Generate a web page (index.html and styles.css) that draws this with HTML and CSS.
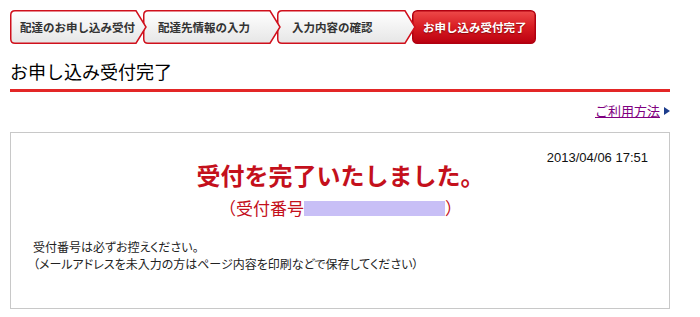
FILE: index.html
```html
<!DOCTYPE html>
<html lang="ja">
<head>
<meta charset="utf-8">
<title>お申し込み受付完了</title>
<link rel="stylesheet" href="styles.css">
</head>
<body>
<div class="page">
  <ol class="steps">
    <li class="step s1">
      <svg class="step-bg" width="137" height="34" viewBox="0 0 137 34"><defs><linearGradient id="g1" x1="0" y1="0" x2="0" y2="1"><stop offset="0" stop-color="#ffffff"/><stop offset="1" stop-color="#e6e6e6"/></linearGradient></defs><path d="M5,0.75 H126 L136,17 L126,33.25 H5 Q0.75,33.25 0.75,29 V5 Q0.75,0.75 5,0.75 Z" fill="url(#g1)" stroke="#d0101c" stroke-width="1.5"/></svg>
      <span class="step-label">配達のお申し込み受付</span>
    </li>
    <li class="step s2">
      <svg class="step-bg" width="138" height="34" viewBox="0 0 138 34"><path d="M5,0.75 H127 L137,17 L127,33.25 H5 Q0.75,33.25 0.75,29 V5 Q0.75,0.75 5,0.75 Z" fill="url(#g1)" stroke="#d0101c" stroke-width="1.5"/></svg>
      <span class="step-label">配達先情報の入力</span>
    </li>
    <li class="step s3">
      <svg class="step-bg" width="139" height="34" viewBox="0 0 139 34"><path d="M5,0.75 H128 L138,17 L128,33.25 H5 Q0.75,33.25 0.75,29 V5 Q0.75,0.75 5,0.75 Z" fill="url(#g1)" stroke="#d0101c" stroke-width="1.5"/></svg>
      <span class="step-label">入力内容の確認</span>
    </li>
    <li class="step s4 current">
      <svg class="step-bg" width="124" height="34" viewBox="0 0 124 34"><defs><linearGradient id="g4" x1="0" y1="0" x2="0" y2="1"><stop offset="0" stop-color="#ee4a4a"/><stop offset="0.5" stop-color="#d81c22"/><stop offset="1" stop-color="#bb0010"/></linearGradient></defs><rect x="0.75" y="0.75" width="122.5" height="32.5" rx="4.5" fill="url(#g4)" stroke="#b00010" stroke-width="1.5"/></svg>
      <span class="step-label">お申し込み受付完了</span>
    </li>
  </ol>

  <h1 class="title">お申し込み受付完了</h1>

  <div class="help">
    <a class="help-link" href="#">ご利用方法</a>
    <svg class="help-arrow" width="6" height="8" viewBox="0 0 6 8"><path d="M0,0 L6,4 L0,8 Z" fill="#1c3c8c"/></svg>
  </div>

  <section class="result">
    <div class="result-head">
      <p class="date">2013/04/06 17:51</p>
      <h2 class="headline">受付を完了いたしました。</h2>
    </div>
    <p class="number">（受付番号<span class="number-mask"></span>）</p>
    <p class="note">受付番号は必ずお控えください。<br>（メールアドレスを未入力の方はページ内容を印刷などで保存してください）</p>
  </section>
</div>
</body>
</html>
```

FILE: styles.css
```css
html, body {
  margin: 0;
  padding: 0;
  background: #ffffff;
}

body {
  font-family: "Noto Sans CJK JP", "Noto Sans", sans-serif;
  color: #222222;
}

.page {
  width: 660px;
  padding: 10px 0 0 10px;
}

.steps {
  list-style: none;
  margin: 0;
  padding: 0;
  display: flex;
  height: 34px;
}

.step {
  position: relative;
  height: 34px;
  display: flex;
  align-items: center;
  flex: none;
}

.step + .step {
  margin-left: -4px;
}

.s1 { width: 137px; z-index: 4; padding-left: 10px; }
.s2 { width: 138px; z-index: 3; padding-left: 15px; }
.s3 { width: 139px; z-index: 2; padding-left: 15px; }
.s4 { width: 124px; z-index: 1; padding-left: 11px; }

.step {
  box-sizing: border-box;
}

.step-bg {
  position: absolute;
  left: 0;
  top: 0;
  display: block;
}

.step-label {
  position: relative;
  font-size: 11.5px;
  font-weight: bold;
  color: #333333;
  line-height: 14px;
  white-space: nowrap;
}

.current .step-label {
  color: #ffffff;
  text-shadow: 0 1px 1px rgba(90, 0, 0, 0.6);
}

.title {
  margin: 16px 0 0 0;
  font-size: 18px;
  font-weight: normal;
  line-height: 22px;
  color: #000000;
  padding-bottom: 7px;
  border-bottom: 3px solid #e32626;
}

.help {
  margin-top: 11px;
  display: flex;
  justify-content: flex-end;
  align-items: center;
  gap: 4px;
  height: 16px;
}

.help-link {
  font-size: 13px;
  line-height: 16px;
  color: #800080;
  text-decoration: underline;
}

.help-arrow {
  display: block;
}

.result {
  margin-top: 13px;
  box-sizing: border-box;
  height: 177px;
  border: 1px solid #c8c8c8;
  padding: 0 21px 0 22px;
}

.result-head {
  display: grid;
  grid-template-columns: 1fr;
}

.date {
  grid-area: 1 / 1;
  justify-self: end;
  margin: 17px 0 0 0;
  font-family: "Liberation Sans", Arial, sans-serif;
  font-size: 13px;
  line-height: 16px;
  color: #111111;
}

.headline {
  grid-area: 1 / 1;
  justify-self: center;
  margin: 28px 0 0 0;
  font-size: 24px;
  line-height: 28px;
  font-weight: bold;
  color: #c4101c;
}

.number {
  margin: 8px 0 0 0;
  text-align: center;
  font-size: 17px;
  line-height: 22px;
  color: #c4101c;
}

.number-mask {
  display: inline-block;
  width: 141px;
  height: 15px;
  background: #c8bff6;
  vertical-align: -1px;
}

.note {
  margin: 19px 0 0 0;
  font-size: 12px;
  line-height: 17px;
  font-feature-settings: "palt";
  color: #222222;
}
```
